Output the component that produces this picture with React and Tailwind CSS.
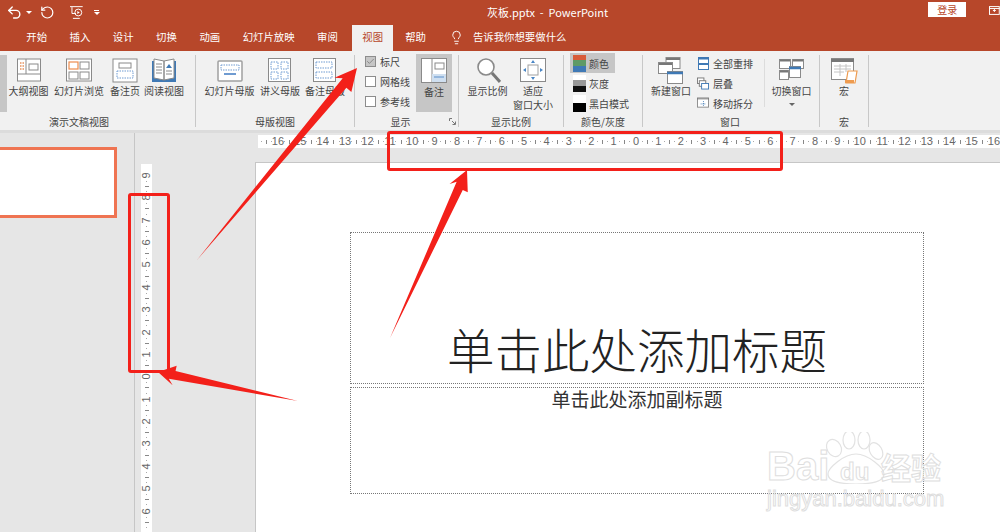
import React from 'react';
import { Undo2, RotateCcw, Lightbulb, Check } from 'lucide-react';

const cjk = { fontFamily: '"Noto Sans CJK SC", sans-serif' };

const tabs = ['开始', '插入', '设计', '切换', '动画', '幻灯片放映', '审阅'];

// wide arrow that tapers to a point at its tail
const arrowPoints = (x1, y1, x2, y2, shaft, head, len) => {
  const d = Math.hypot(x2 - x1, y2 - y1);
  const ux = (x2 - x1) / d;
  const uy = (y2 - y1) / d;
  const nx = -uy;
  const ny = ux;
  const bx = x2 - ux * len;
  const by = y2 - uy * len;
  const nk = x2 - ux * (len - 5);
  const nl = y2 - uy * (len - 5);
  return [
    [x1, y1],
    [bx + (nx * shaft) / 2, by + (ny * shaft) / 2],
    [bx + nx * head, by + ny * head],
    [x2, y2],
    [bx - nx * head, by - ny * head],
    [nk - (nx * shaft) / 2, nl - (ny * shaft) / 2],
  ]
    .map((p) => p.join(','))
    .join(' ');
};

const Divider = ({ faint }) => (
  <div className={`w-px h-[72px] mt-1 shrink-0 ${faint ? 'bg-[#dcdcdc]' : 'bg-[#c8c8c8]'}`} />
);

const Group = ({ w, label, labelPad = 0, launcher, children }) => (
  <div className="flex flex-col shrink-0" style={{ width: w }}>
    <div className="h-16 flex">{children}</div>
    <div className="relative h-3.5 leading-[14px] text-center text-[10px] text-[#444]" style={{ paddingRight: labelPad }}>
      {label}
      {launcher && (
        <svg className="absolute right-[2px] top-[3px]" width="7" height="7" viewBox="0 0 7 7" fill="none" stroke="#777">
          <path d="M0.5 3V0.5H3M3 3l3 3M6.5 3.5v3h-3" />
        </svg>
      )}
    </div>
  </div>
);

const BigBtn = ({ w, lines, children, active, caret }) => (
  <div className={`shrink-0 flex flex-col items-center pt-1.5 ${active ? 'bg-[#c6c6c6]' : ''}`} style={{ width: w }}>
    <div className="h-[27px] flex items-center justify-center">{children}</div>
    {lines.map((l) => (
      <div key={l} className="text-[10px] leading-[14px] text-[#444] whitespace-nowrap">
        {l}
      </div>
    ))}
    {caret && <div className="w-0 h-0 mt-[5px] border-x-[3px] border-x-transparent border-t-[3px] border-t-[#666]" />}
  </div>
);

const Box = ({ children, w = 26, h = 25 }) => (
  <svg width={w} height={h} viewBox={`0 0 ${w} ${h}`} fill="none">
    {children}
  </svg>
);

const CheckRow = ({ label, checked }) => (
  <div className="h-5 flex items-center gap-1">
    <div className={`w-[11px] h-[11px] border border-[#8c8c8c] flex items-center justify-center ${checked ? 'bg-[#c6c6c6]' : 'bg-white'}`}>
      {checked && <Check size={9} strokeWidth={2} className="text-[#777]" />}
    </div>
    <span className="text-[10px] text-[#444]">{label}</span>
  </div>
);

const Swatch = ({ colors }) => (
  <div className="w-[13px] h-[17px] flex flex-col shrink-0">
    {colors.map((c) => (
      <div key={c} className="flex-1" style={{ background: c }} />
    ))}
  </div>
);

const ColorRow = ({ label, colors, active }) => (
  <div className={`h-5 w-[45px] flex items-center gap-[3px] pl-[3px] ${active ? 'bg-[#c6c6c6]' : ''}`}>
    <Swatch colors={colors} />
    <span className="text-[10px] text-[#444] whitespace-nowrap">{label}</span>
  </div>
);

const SmallRow = ({ label, children }) => (
  <div className="h-5 flex items-center gap-1">
    <div className="w-3 flex justify-center">{children}</div>
    <span className="text-[10px] text-[#444] whitespace-nowrap">{label}</span>
  </div>
);

const Ticks = ({ vertical }) => (
  <div className={`flex justify-between items-center shrink-0 ${vertical ? 'flex-col h-[11.2px] w-full' : 'w-[11.2px] h-full'}`}>
    <span className="w-px h-px bg-[#aaa]" />
    <span className={vertical ? 'w-1 h-px bg-[#888]' : 'w-px h-1 bg-[#888]'} />
    <span className="w-px h-px bg-[#aaa]" />
  </div>
);

const RulerNum = ({ n, vertical }) => (
  <div
    className={`shrink-0 flex items-center justify-center text-[11px] leading-none text-[#666] ${vertical ? 'h-[11.2px] w-full' : 'w-[11.2px] h-full'}`}
    style={{ fontFamily: '"Liberation Sans", sans-serif' }}
  >
    <span className={vertical ? '-rotate-90' : ''}>{n}</span>
  </div>
);

const hNums = [16, 15, 14, 13, 12, 11, 10, 9, 8, 7, 6, 5, 4, 3, 2, 1, 0, 1, 2, 3, 4, 5, 6, 7, 8, 9, 10, 11, 12, 13, 14, 15, 16];
const vNums = [9, 8, 7, 6, 5, 4, 3, 2, 1, 0, 1, 2, 3, 4, 5, 6];

const App = () => {
  return (
    <div className="w-[1000px] h-[532px] overflow-hidden relative flex flex-col bg-[#e6e6e6]" style={cjk}>
      {/* title bar */}
      <div className="h-[25px] bg-[#b7472a] flex items-center text-white shrink-0">
        <Undo2 size={17} strokeWidth={2} className="ml-[6px]" />
        <span className="ml-[3px] w-0 h-0 border-x-[3px] border-x-transparent border-t-[3px] border-t-white" />
        <RotateCcw size={15} strokeWidth={2} className="ml-[8px]" />
        <svg width="14" height="15" viewBox="0 0 14 15" fill="none" stroke="#fff" className="ml-[16px]">
          <path d="M0 1.5h13M2 2v6.5h4" />
          <circle cx="8.5" cy="7.5" r="3.5" />
          <path d="M7.5 6v3l2.5-1.5z" fill="#fff" stroke="none" />
          <path d="M3 13.5h7" />
        </svg>
        <div className="ml-[10px] flex flex-col items-center gap-px">
          <span className="w-[5px] h-px bg-white" />
          <span className="w-0 h-0 border-x-[3px] border-x-transparent border-t-[3px] border-t-white" />
        </div>
        <span className="ml-[387px] text-[11px] whitespace-nowrap">灰板.pptx&nbsp; -&nbsp; PowerPoint</span>
        <div className="ml-[320px] mb-[7px] w-[39px] h-[15px] bg-white text-[#b7472a] text-[10px] flex items-center justify-center">
          登录
        </div>
        <svg width="11" height="9" viewBox="0 0 11 9" fill="none" stroke="#fff" className="ml-[23px] mb-[4px]">
          <rect x="0.5" y="0.5" width="10" height="8" />
          <path d="M0 2.5h11M5.5 3v3M4 4.5h3" />
        </svg>
      </div>

      {/* tabs */}
      <div className="h-[26px] bg-[#b7472a] flex items-stretch text-white text-[10.4px] pl-[15px] shrink-0">
        {tabs.map((t) => (
          <div key={t} className="px-[11.25px] pt-[4px] whitespace-nowrap">
            {t}
          </div>
        ))}
        <div className="ml-[3px] w-[41px] bg-[#f1f1f1] text-[#b7472a] text-center pt-[4px]">视图</div>
        <div className="ml-3 pt-[4px]">帮助</div>
        <Lightbulb size={15} strokeWidth={1.5} className="ml-[23px] mt-[5px]" />
        <div className="ml-[9px] pt-[4px] whitespace-nowrap">告诉我你想要做什么</div>
      </div>

      {/* ribbon */}
      <div className="h-[79px] bg-[#f1f1f1] flex items-start shrink-0">
        <Group w={195} label="演示文稿视图" labelPad={37}>
          <div className="w-[7px] h-[57px] mt-1 bg-[#c6c6c6] shrink-0" />
          <BigBtn w={43} lines={['大纲视图']}>
            <Box>
              <rect x="1.5" y="1" width="23" height="22" fill="#fff" stroke="#8a8a8a" />
              <path d="M10 1v15M1 16h24" stroke="#8a8a8a" />
              <path d="M4 5h4M4 8h4M4 11h4" stroke="#e8935f" strokeWidth="1.5" strokeDasharray="1.5 1" />
              <rect x="13" y="6" width="9" height="6" stroke="#8a8a8a" />
            </Box>
          </BigBtn>
          <div className="w-[3px]" />
          <BigBtn w={52} lines={['幻灯片浏览']}>
            <Box>
              <rect x="0.5" y="1" width="25" height="22" fill="#fff" stroke="#8a8a8a" />
              <rect x="3" y="4" width="9" height="7" stroke="#ed8c4e" strokeWidth="1.2" />
              <rect x="14" y="4" width="9" height="7" stroke="#8a8a8a" />
              <rect x="3" y="14" width="9" height="7" stroke="#8a8a8a" />
              <rect x="14" y="14" width="9" height="7" stroke="#8a8a8a" />
            </Box>
          </BigBtn>
          <div className="w-[2px]" />
          <BigBtn w={36} lines={['备注页']}>
            <Box>
              <rect x="1" y="1" width="24" height="23" fill="#fff" stroke="#8a8a8a" />
              <rect x="7" y="5" width="12" height="5" stroke="#8a8a8a" />
              <rect x="5" y="13" width="16" height="7" stroke="#6f9bd1" strokeDasharray="1.5 1" />
            </Box>
          </BigBtn>
          <BigBtn w={42} lines={['阅读视图']}>
            <Box>
              <path d="M1 3h24v21H1z" fill="#3f79b5" />
              <path d="M3 1l10 2v19L3 20zM23 1L13 3v19l10-2z" fill="#fff" stroke="#8a8a8a" />
              <path d="M5 6h6M5 9h6M5 12h6M5 15h6" stroke="#8a8a8a" />
              <path d="M15 10l3-4 3 4z" fill="#3f79b5" />
              <path d="M15 13h6M15 16h6" stroke="#8a8a8a" />
            </Box>
          </BigBtn>
        </Group>
        <Divider />
        <Group w={158} label="母版视图" labelPad={0}>
          <div className="w-[8px]" />
          <BigBtn w={51} lines={['幻灯片母版']}>
            <Box>
              <rect x="1" y="3" width="24" height="20" rx="1" fill="#fff" stroke="#a0a0a0" strokeWidth="1.5" />
              <rect x="4" y="7" width="18" height="5" stroke="#6f9bd1" strokeDasharray="1.5 1" />
              <path d="M7 16h12" stroke="#6f9bd1" strokeWidth="2" />
            </Box>
          </BigBtn>
          <BigBtn w={50} lines={['讲义母版']}>
            <Box>
              <rect x="1.5" y="0.5" width="22" height="23" fill="#fff" stroke="#8a8a8a" />
              <path d="M4 4h7v7H4zM14 4h7v7h-7zM4 14h7v7H4zM14 14h7v7h-7z" stroke="#6f9bd1" strokeDasharray="1.5 1" />
            </Box>
          </BigBtn>
          <BigBtn w={40} lines={['备注母版']}>
            <Box>
              <rect x="1.5" y="0.5" width="22" height="23" fill="#fff" stroke="#8a8a8a" />
              <rect x="4" y="4" width="16" height="6" stroke="#6f9bd1" strokeDasharray="1.5 1" />
              <rect x="4" y="14" width="16" height="6" stroke="#6f9bd1" strokeDasharray="1.5 1" />
            </Box>
          </BigBtn>
        </Group>
        <Divider />
        <Group w={103} label="显示" labelPad={12} launcher>
          <div className="pl-[10px] w-[61px]">
            <CheckRow label="标尺" checked />
            <CheckRow label="网格线" />
            <CheckRow label="参考线" />
          </div>
          <div className="mt-[3px] w-9 h-[58px] bg-[#c6c6c6] flex flex-col items-center pt-1">
            <svg width="26" height="25" viewBox="0 0 26 25" fill="none">
              <rect x="0.5" y="0.5" width="25" height="24" fill="#fff" stroke="#8a8a8a" />
              <path d="M11 1v23" stroke="#8a8a8a" />
              <rect x="14" y="5" width="9" height="6" stroke="#8a8a8a" />
              <rect x="11" y="16" width="14" height="8" fill="#cfdff0" />
              <path d="M13 19h10" stroke="#5b8ec9" strokeWidth="1" />
            </svg>
            <div className="text-[10px] leading-[14px] mt-[2px] text-[#444]">备注</div>
          </div>
        </Group>
        <Divider />
        <Group w={104} label="显示比例" labelPad={0}>
          <div className="w-[5px]" />
          <BigBtn w={47} lines={['显示比例']}>
            <Box w={26} h={27}>
              <circle cx="11" cy="10" r="8" fill="#fff" stroke="#8a8a8a" strokeWidth="1.6" />
              <path d="M17 16l8 9" stroke="#777" strokeWidth="3" />
            </Box>
          </BigBtn>
          <BigBtn w={44} lines={['适应', '窗口大小']}>
            <Box>
              <rect x="0.5" y="0.5" width="25" height="23" fill="#fff" stroke="#8a8a8a" />
              <rect x="8" y="7" width="10" height="10" stroke="#a0a0a0" />
              <path d="M13 2l2 3h-4zM13 22l2-3h-4zM3 12l3-2v4zM23 12l-3-2v4z" fill="#4a86c5" />
            </Box>
          </BigBtn>
        </Group>
        <Divider />
        <Group w={78} label="颜色/灰度" labelPad={0}>
          <div className="pl-[6px] pt-[2px]">
            <ColorRow active label="颜色" colors={['#d85c3a', '#5f9a66', '#3f79b5']} />
            <ColorRow label="灰度" colors={['#fff', '#999', '#111']} />
            <ColorRow label="黑白模式" colors={['#fff', '#000']} />
          </div>
        </Group>
        <Divider />
        <Group w={176} label="窗口" labelPad={2}>
          <div className="w-[7px]" />
          <BigBtn w={42} lines={['新建窗口']}>
            <Box w={26} h={27}>
              <rect x="8" y="0.5" width="14" height="11" fill="#fff" stroke="#8a8a8a" />
              <path d="M8 2h14" stroke="#777" strokeWidth="2" />
              <rect x="0.5" y="5.5" width="14" height="11" fill="#fff" stroke="#8a8a8a" />
              <path d="M1 7h13" stroke="#777" strokeWidth="2" />
              <rect x="9.5" y="14.5" width="15" height="12" fill="#fff" stroke="#8a8a8a" />
              <path d="M9 16h16" stroke="#3f79b5" strokeWidth="2.5" />
            </Box>
          </BigBtn>
          <div className="w-[5px]" />
          <div className="w-[67px] pt-[2px]">
            <SmallRow label="全部重排">
              <svg width="11" height="13" viewBox="0 0 11 13" fill="none">
                <rect x="0.5" y="0.5" width="10" height="12" fill="#fff" stroke="#3f79b5" />
                <path d="M0 1.5h11M0 7h11" stroke="#3f79b5" strokeWidth="2" />
              </svg>
            </SmallRow>
            <SmallRow label="层叠">
              <svg width="13" height="13" viewBox="0 0 13 13" fill="none">
                <rect x="0.5" y="0.5" width="7" height="6" fill="#fff" stroke="#777" />
                <rect x="2.5" y="3.5" width="7" height="6" fill="#fff" stroke="#777" />
                <rect x="5" y="6.5" width="7.5" height="6" fill="#fff" stroke="#3f79b5" />
              </svg>
            </SmallRow>
            <SmallRow label="移动拆分">
              <svg width="13" height="12" viewBox="0 0 13 12" fill="none">
                <rect x="0.5" y="0.5" width="12" height="10" fill="#fff" stroke="#8a8a8a" />
                <path d="M0 1.5h13" stroke="#777" />
                <path d="M7 4v6M4 7h6" stroke="#3f79b5" strokeDasharray="1 1" />
              </svg>
            </SmallRow>
          </div>
          <div className="w-[54px] shrink-0 flex">
            <div className="w-px h-[48px] mt-[8px] bg-[#dcdcdc]" />
            <BigBtn w={53} lines={['切换窗口']} caret>
              <Box>
                <rect x="0.5" y="1.5" width="11" height="9" fill="#fff" stroke="#8a8a8a" />
                <path d="M1 2.5h10" stroke="#777" strokeWidth="2" />
                <rect x="13.5" y="1.5" width="11" height="9" fill="#fff" stroke="#8a8a8a" />
                <path d="M14 2.5h10" stroke="#777" strokeWidth="2" />
                <rect x="0.5" y="12.5" width="9" height="9" fill="#fff" stroke="#8a8a8a" />
                <path d="M1 13.5h8" stroke="#777" strokeWidth="2" />
                <rect x="10.5" y="8.5" width="11" height="11" fill="#fff" stroke="#8a8a8a" />
                <path d="M10 10h12" stroke="#3f79b5" strokeWidth="2.5" />
              </Box>
            </BigBtn>
          </div>
        </Group>
        <Divider />
        <Group w={48} label="宏" labelPad={0}>
          <BigBtn w={48} lines={['宏']}>
            <Box w={28} h={26}>
              <rect x="1.5" y="0.5" width="22" height="21" fill="#fff" stroke="#8a8a8a" />
              <path d="M1 2.5h23" stroke="#777" strokeWidth="3" />
              <path d="M4 8h17M4 11h17M4 14h10M10 6v12M16 6v8" stroke="#c4c4c4" />
              <path d="M18 13h9l-2 12h-9z" fill="#fff" stroke="#ee9b4f" strokeWidth="1.2" />
              <path d="M15 22h9v3h-9z" fill="#ee9b4f" />
            </Box>
          </BigBtn>
        </Group>
        <Divider />
      </div>

      {/* body */}
      <div className="flex-1 flex min-h-0 border-t-[3px] border-t-[#dcdcdc]">
        <div className="w-[134px] shrink-0 border-r border-r-[#c6c6c6] pt-3.5 box-content">
          <div className="w-[117px] h-[71px] bg-white border-[3px] border-l-0 border-[#ef7452]" />
        </div>
        <div className="flex-1 min-w-0 flex flex-col">
          <div className="h-[29px] shrink-0 pl-[123px] pt-0.5">
            <div className="h-[13px] bg-white flex pl-[3.2px]">
              <Ticks />
              {hNums.map((n, i) => (
                <React.Fragment key={i}>
                  <RulerNum n={n} />
                  <Ticks />
                </React.Fragment>
              ))}
            </div>
          </div>
          <div className="flex-1 flex min-h-0">
            <div className="ml-1.5 mt-[2px] w-[11px] bg-white shrink-0 flex flex-col pt-[5.8px] overflow-hidden">
              {vNums.map((n, i) => (
                <React.Fragment key={i}>
                  <RulerNum n={n} vertical />
                  <Ticks vertical />
                </React.Fragment>
              ))}
            </div>
            <div className="ml-[103px] flex-1 bg-white border-l border-t border-[#c6c6c6] pl-[94px] pt-[69px]">
              <div className="w-[574px] h-[152px] border border-dotted border-[#777] flex items-end justify-center">
                <span className="text-[47.5px] leading-[64px] font-extralight text-[#222] mb-[2px] whitespace-nowrap">单击此处添加标题</span>
              </div>
              <div className="w-[574px] h-[107px] mt-[3px] border border-dotted border-[#777] flex justify-center">
                <span className="text-[19px] leading-[22px] text-[#333] whitespace-nowrap">单击此处添加副标题</span>
              </div>
            </div>
          </div>
        </div>
      </div>

      {/* red notes on the picture */}
      <div className="absolute left-[387px] top-[131px] w-[396px] h-[40px] border-[3px] border-[#f3201a] rounded-[3px]" />
      <div className="absolute left-[128px] top-[193px] w-[42px] h-[180px] border-[3px] border-[#f3201a] rounded-[3px]" />
      <svg className="absolute inset-0" width="1000" height="532" viewBox="0 0 1000 532">
        <polygon points={arrowPoints(197, 260, 357, 68, 9, 11, 22)} fill="#f3201a" />
        <polygon points={arrowPoints(390, 338, 467, 170, 9, 10, 20)} fill="#f3201a" />
        <polygon points={arrowPoints(298, 401, 158, 372, 9, 10, 17)} fill="#f3201a" />
      </svg>

      {/* watermark */}
      <div className="absolute left-[767px] top-[432px] w-[180px] h-[80px] text-transparent [-webkit-text-stroke:1px_#dedede]">
        <svg className="absolute left-0 top-0" width="180" height="52" viewBox="0 0 180 52" fill="none" stroke="#e2e2e2" strokeWidth="1.2">
          <ellipse cx="67" cy="16" rx="7" ry="9" transform="rotate(-30 67 16)" />
          <ellipse cx="82" cy="8" rx="6" ry="9" />
          <ellipse cx="97" cy="8" rx="6" ry="9" />
          <ellipse cx="109" cy="19" rx="6" ry="9" transform="rotate(-30 109 19)" />
          <path d="M89 22c12 0 28 14 28 20 0 8-14 10-28 10s-28-2-28-10c0-6 16-20 28-20z" />
        </svg>
        <span className="absolute left-0 top-[12px] text-[40px] leading-[44px] font-bold whitespace-nowrap" style={{ fontFamily: '"Liberation Sans", sans-serif' }}>Bai</span>
        <span className="absolute left-[73px] top-[27px] text-[24px] leading-[26px] font-bold" style={{ fontFamily: '"Liberation Sans", sans-serif' }}>du</span>
        <span className="absolute left-[114px] top-[16px] text-[30px] leading-[36px] font-bold whitespace-nowrap">经验</span>
        <span className="absolute left-0 top-[54px] text-[22px] leading-[26px] whitespace-nowrap" style={{ fontFamily: '"Liberation Sans", sans-serif' }}>jingyan.baidu.com</span>
      </div>
    </div>
  );
};

export default App;
